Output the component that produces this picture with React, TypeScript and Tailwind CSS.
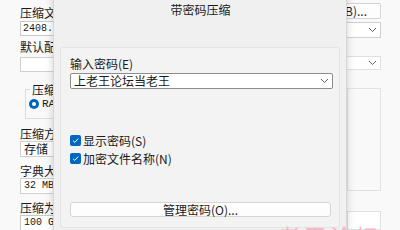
import React from "react";

const font = { fontFamily: '"Noto Sans CJK SC", "Noto Sans", sans-serif' };

function Chevron({ className = "" }: { className?: string }) {
  return (
    <svg width="9" height="6" viewBox="0 0 9 6" className={className}>
      <path d="M1 1 L4.5 4.5 L8 1" fill="none" stroke="#606060" strokeWidth="1" />
    </svg>
  );
}

function Check() {
  return (
    <span className="w-[11px] h-[11px] rounded-[2px] bg-[#0067c0] flex items-center justify-center">
      <svg width="9" height="9" viewBox="0 0 9 9">
        <path d="M2 4.7 L3.8 6.4 L7.2 2.6" fill="none" stroke="white" strokeWidth="1" />
      </svg>
    </span>
  );
}

export default function App() {
  return (
    <div
      className="relative w-[400px] h-[230px] overflow-hidden bg-[#f9f9f9] text-[12px] text-[#1a1a1a]"
      style={font}
    >
      {/* background window */}
      <div className="flex w-full h-full justify-between">
        <div className="w-[53px] overflow-hidden whitespace-nowrap pl-[20px] pt-[4px] flex flex-col">
          <div className="h-[17px] leading-[17px]">压缩文件名和参数</div>
          <div className="h-[15px] w-[120px] shrink-0 bg-white border border-[#c8c8c8] leading-[13px] pl-[2px] font-['Liberation_Mono'] text-[10px]">2408.rar</div>
          <div className="h-[17px] mt-[2px] leading-[17px]">默认配置</div>
          <div className="h-[15px] w-[120px] shrink-0 mt-[2px] bg-white border border-[#d0d0d0]"></div>
          <div className="mt-[17px] ml-[5px] w-[120px] h-[30px] shrink-0 border border-[#dcdcdc] relative">
            <div className="absolute -top-[9px] left-[4px] px-[2px] bg-[#f9f9f9] leading-[17px]">压缩文件格式</div>
            <div className="flex items-center gap-[3px] mt-[6px] ml-[3px]">
              <span className="w-[10px] h-[10px] rounded-full bg-[#0067c0] flex items-center justify-center">
                <span className="w-[4px] h-[4px] rounded-full bg-white"></span>
              </span>
              <span className="font-['Liberation_Mono'] text-[11px]">RAR</span>
            </div>
          </div>
          <div className="h-[15px] mt-[7px] leading-[15px]">压缩方式</div>
          <div className="h-[16px] w-[120px] shrink-0 bg-white border border-[#d0d0d0] leading-[14px] pl-[3px]">存储</div>
          <div className="h-[15px] mt-[6px] leading-[15px]">字典大小</div>
          <div className="h-[16px] w-[120px] shrink-0 bg-white border border-[#d0d0d0] leading-[14px] pl-[3px] font-['Liberation_Mono'] text-[10px]">32 MB</div>
          <div className="h-[15px] mt-[6px] leading-[15px]">压缩为分卷</div>
          <div className="h-[16px] w-[120px] shrink-0 bg-white border border-[#c8c8c8] leading-[14px] pl-[3px] font-['Liberation_Mono'] text-[10px]">100 GB</div>
        </div>
        <div className="w-[70px] pr-[19px] pt-[3px] flex flex-col items-end">
          <div className="h-[16px] w-[60px] bg-[#fdfdfd] border border-[#d5d5d5] rounded-[2px] leading-[14px] text-right pr-[13px]">(B)...</div>
          <div className="h-[16px] w-[60px] mt-[3px] bg-white border border-[#d0d0d0] flex items-center justify-end pr-[3px]"><Chevron /></div>
          <div className="h-[15px] w-[60px] mt-[18px] bg-white border border-[#e0e0e0] flex items-center justify-end pr-[3px]"><Chevron /></div>
          <div className="h-[105px] w-[34px] mt-[18px] border border-[#e2e2e2]"></div>
          <div className="h-[20px] w-[34px] mt-[20px] border border-[#e2e2e2] bg-white"></div>
        </div>
      </div>

      {/* dialog */}
      <div className="absolute left-[53px] top-[-20px] w-[294px] h-[270px] bg-[#f0f0f0] border border-[#d8d8d8] shadow-[0_0_8px_rgba(0,0,0,0.18)] flex flex-col">
        <div className="h-[38px] flex items-end justify-center pb-[1px] leading-[17px] pl-[1px]">带密码压缩</div>
        <div className="mt-[28px] mx-[6px] flex-1 mb-[21px] bg-[#f3f3f3] border border-[#e3e3e3] rounded-[3px] px-[9px] pt-[7px] flex flex-col">
          <div className="leading-[17px]">输入密码(E)</div>
          <div className="mt-[1px] h-[16px] w-[263px] bg-white border border-[#8c8c8c] rounded-[2px] flex items-center justify-between pl-[3px] pr-[3px]">
            <span className="leading-[14px]">上老王论坛当老王</span>
            <Chevron />
          </div>
          <div className="mt-[43px] flex items-center gap-[2px] h-[17px]">
            <Check />
            <span className="leading-[17px]">显示密码(S)</span>
          </div>
          <div className="mt-[1px] flex items-center gap-[2px] h-[17px]">
            <Check />
            <span className="leading-[17px]">加密文件名称(N)</span>
          </div>
          <div className="mt-[35px] h-[15px] w-[261px] bg-[#fdfdfd] border border-[#d5d5d5] rounded-[3px] flex items-center justify-center leading-[13px]">管理密码(O)...</div>
        </div>
      </div>

      {/* watermark */}
      <div className="absolute left-[278px] top-[222px] text-[22px] leading-[26px] text-[#f6b5c8] tracking-[4px]">老王论坛</div>
    </div>
  );
}
